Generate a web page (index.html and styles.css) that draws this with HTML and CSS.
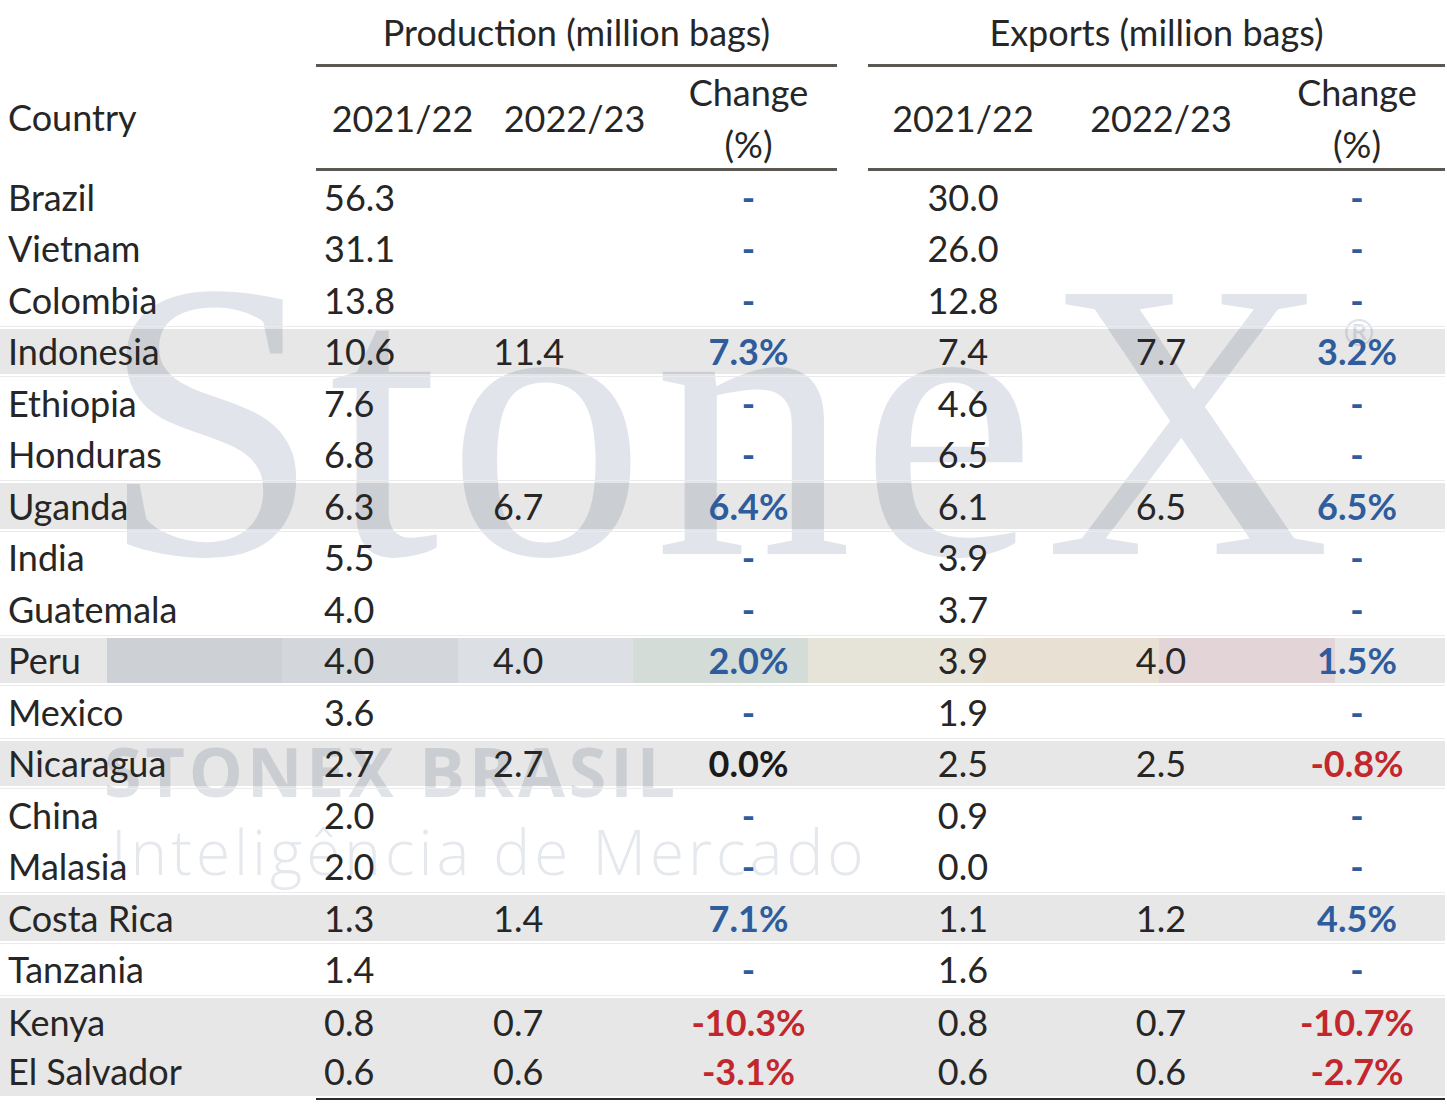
FILE: index.html
```html
<!DOCTYPE html>
<html lang="en">
<head>
<meta charset="utf-8">
<title>Coffee production and exports</title>
<link rel="stylesheet" href="styles.css">
</head>
<body>
<div class="page">
  <div class="watermark" aria-hidden="true">
    <span class="wm-stonex">StoneX</span>
    <span class="wm-reg">®</span>
    <span class="wm-brasil">STONEX BRASIL</span>
    <span class="wm-intel">Inteligência de Mercado</span>
  </div>

  <div class="table">
    <div class="row head1">
      <div class="cell"></div>
      <div class="cell group">Production (million bags)</div>
      <div class="cell"></div>
      <div class="cell group">Exports (million bags)</div>
    </div>
    <div class="row head2">
      <div class="cell c">Country</div>
      <div class="cell hc ruled">2021/22</div>
      <div class="cell hc ruled">2022/23</div>
      <div class="cell hc ruled two">Change<br>(%)</div>
      <div class="cell"></div>
      <div class="cell hc ruled">2021/22</div>
      <div class="cell hc ruled">2022/23</div>
      <div class="cell hc ruled two shift">Change<br>(%)</div>
    </div>

    <div class="row"><div class="cell c">Brazil</div><div class="cell p1">56.3</div><div class="cell p2"></div><div class="cell ch blue">-</div><div class="cell"></div><div class="cell e">30.0</div><div class="cell e"></div><div class="cell ch blue shift">-</div></div>
    <div class="row"><div class="cell c">Vietnam</div><div class="cell p1">31.1</div><div class="cell p2"></div><div class="cell ch blue">-</div><div class="cell"></div><div class="cell e">26.0</div><div class="cell e"></div><div class="cell ch blue shift">-</div></div>
    <div class="row"><div class="cell c">Colombia</div><div class="cell p1">13.8</div><div class="cell p2"></div><div class="cell ch blue">-</div><div class="cell"></div><div class="cell e">12.8</div><div class="cell e"></div><div class="cell ch blue shift">-</div></div>
    <div class="row shaded"><div class="cell c">Indonesia</div><div class="cell p1">10.6</div><div class="cell p2">11.4</div><div class="cell ch blue">7.3%</div><div class="cell"></div><div class="cell e">7.4</div><div class="cell e">7.7</div><div class="cell ch blue shift">3.2%</div></div>
    <div class="row"><div class="cell c">Ethiopia</div><div class="cell p1">7.6</div><div class="cell p2"></div><div class="cell ch blue">-</div><div class="cell"></div><div class="cell e">4.6</div><div class="cell e"></div><div class="cell ch blue shift">-</div></div>
    <div class="row"><div class="cell c">Honduras</div><div class="cell p1">6.8</div><div class="cell p2"></div><div class="cell ch blue">-</div><div class="cell"></div><div class="cell e">6.5</div><div class="cell e"></div><div class="cell ch blue shift">-</div></div>
    <div class="row shaded"><div class="cell c">Uganda</div><div class="cell p1">6.3</div><div class="cell p2">6.7</div><div class="cell ch blue">6.4%</div><div class="cell"></div><div class="cell e">6.1</div><div class="cell e">6.5</div><div class="cell ch blue shift">6.5%</div></div>
    <div class="row"><div class="cell c">India</div><div class="cell p1">5.5</div><div class="cell p2"></div><div class="cell ch blue">-</div><div class="cell"></div><div class="cell e">3.9</div><div class="cell e"></div><div class="cell ch blue shift">-</div></div>
    <div class="row"><div class="cell c">Guatemala</div><div class="cell p1">4.0</div><div class="cell p2"></div><div class="cell ch blue">-</div><div class="cell"></div><div class="cell e">3.7</div><div class="cell e"></div><div class="cell ch blue shift">-</div></div>
    <div class="row shaded band"><div class="cell c">Peru</div><div class="cell p1">4.0</div><div class="cell p2">4.0</div><div class="cell ch blue">2.0%</div><div class="cell"></div><div class="cell e">3.9</div><div class="cell e">4.0</div><div class="cell ch blue shift">1.5%</div></div>
    <div class="row"><div class="cell c">Mexico</div><div class="cell p1">3.6</div><div class="cell p2"></div><div class="cell ch blue">-</div><div class="cell"></div><div class="cell e">1.9</div><div class="cell e"></div><div class="cell ch blue shift">-</div></div>
    <div class="row shaded"><div class="cell c">Nicaragua</div><div class="cell p1">2.7</div><div class="cell p2">2.7</div><div class="cell ch black">0.0%</div><div class="cell"></div><div class="cell e">2.5</div><div class="cell e">2.5</div><div class="cell ch red shift">-0.8%</div></div>
    <div class="row"><div class="cell c">China</div><div class="cell p1">2.0</div><div class="cell p2"></div><div class="cell ch blue">-</div><div class="cell"></div><div class="cell e">0.9</div><div class="cell e"></div><div class="cell ch blue shift">-</div></div>
    <div class="row"><div class="cell c">Malasia</div><div class="cell p1">2.0</div><div class="cell p2"></div><div class="cell ch blue">-</div><div class="cell"></div><div class="cell e">0.0</div><div class="cell e"></div><div class="cell ch blue shift">-</div></div>
    <div class="row shaded"><div class="cell c">Costa Rica</div><div class="cell p1">1.3</div><div class="cell p2">1.4</div><div class="cell ch blue">7.1%</div><div class="cell"></div><div class="cell e">1.1</div><div class="cell e">1.2</div><div class="cell ch blue shift">4.5%</div></div>
    <div class="row"><div class="cell c">Tanzania</div><div class="cell p1">1.4</div><div class="cell p2"></div><div class="cell ch blue">-</div><div class="cell"></div><div class="cell e">1.6</div><div class="cell e"></div><div class="cell ch blue shift">-</div></div>
    <div class="row shaded first"><div class="cell c">Kenya</div><div class="cell p1">0.8</div><div class="cell p2">0.7</div><div class="cell ch red">-10.3%</div><div class="cell"></div><div class="cell e">0.8</div><div class="cell e">0.7</div><div class="cell ch red shift">-10.7%</div></div>
    <div class="row shaded last"><div class="cell c">El Salvador</div><div class="cell p1">0.6</div><div class="cell p2">0.6</div><div class="cell ch red">-3.1%</div><div class="cell"></div><div class="cell e">0.6</div><div class="cell e">0.6</div><div class="cell ch red shift">-2.7%</div></div>
    <div class="bottom-rule"></div>
  </div>
</div>
</body>
</html>
```

FILE: styles.css
```css
html, body {
  margin: 0;
  padding: 0;
  background: #ffffff;
}

.page {
  position: relative;
  width: 1447px;
  height: 1109px;
  overflow: hidden;
  font-family: "Lato", "Liberation Sans", sans-serif;
  font-size: 36px;
  color: #262626;
}

/* ---------- watermark ---------- */
.watermark {
  position: absolute;
  left: 0;
  top: 0;
  width: 1447px;
  height: 1109px;
  z-index: 0;
  pointer-events: none;
}

.wm-stonex {
  position: absolute;
  left: 100px;
  top: 222px;
  font-family: "Liberation Serif", serif;
  font-size: 397px;
  line-height: 1;
  letter-spacing: 8px;
  color: #e1e5eb;
  white-space: nowrap;
}

.wm-reg {
  position: absolute;
  left: 1340px;
  top: 314px;
  font-family: "DejaVu Sans", sans-serif;
  font-size: 38px;
  line-height: 1;
  color: #dde2e9;
}

.wm-brasil {
  position: absolute;
  left: 104px;
  top: 737px;
  font-family: "Open Sans", sans-serif;
  font-weight: 700;
  font-size: 68px;
  line-height: 1;
  letter-spacing: 4px;
  color: #dfe3e8;
  white-space: nowrap;
}

.wm-intel {
  position: absolute;
  left: 111px;
  top: 820px;
  font-family: "Open Sans", sans-serif;
  font-weight: 300;
  font-size: 62px;
  line-height: 1;
  letter-spacing: 4px;
  color: #e5e8ec;
  white-space: nowrap;
}

/* ---------- table ---------- */
.table {
  position: relative;
  z-index: 1;
}

.row {
  display: grid;
  grid-template-columns: 316px 173px 171px 177px 31px 190px 206px 181px;
  grid-template-rows: 100%;
  height: 51.5px;
  box-sizing: border-box;
  width: 1445px;
}

.cell {
  display: flex;
  align-items: center;
  white-space: nowrap;
  min-width: 0;
  min-height: 0;
}

.head1 {
  grid-template-columns: 316px 521px 31px 577px;
  height: 67px;
}

.head1 .group {
  justify-content: center;
  border-bottom: 3px solid #5b5752;
}

.head2 {
  height: 104px;
}

.head2 .ruled {
  border-bottom: 3px solid #5b5752;
}

.hc {
  justify-content: center;
  text-align: center;
}

.hc.two {
  line-height: 52px;
}

.c {
  padding-left: 8px;
}

.head2 .c {
  padding-bottom: 4px;
}

.p1 {
  padding-left: 8px;
}

.p2 {
  padding-left: 4px;
}

.e {
  justify-content: center;
}

.ch {
  justify-content: center;
  font-weight: 700;
}

.shift {
  padding-left: 5px;
}

.blue {
  color: #2e5c9c;
}

.red {
  color: #c1272d;
}

.black {
  color: #1a1a1a;
}

/* shaded rows */
.shaded {
  border-top: 1px solid #ebebeb;
  border-bottom: 1px solid #ebebeb;
  padding: 2px 0;
  background-color: rgba(0, 0, 0, 0.095);
  background-clip: content-box;
}

.shaded.first {
  border-bottom: none;
  padding-bottom: 0;
}

.shaded.last {
  border-top: none;
  padding-top: 0;
  border-bottom: none;
}

.band {
  background-image: linear-gradient(to right,
    transparent 0, transparent 107px,
    #cdd1d6 107px, #cdd1d6 282px,
    #d3d7dc 282px, #d3d7dc 458px,
    #dce0e5 458px, #dce0e5 633px,
    #d3dcd7 633px, #d3dcd7 808px,
    #e6e4d9 808px, #e6e4d9 983px,
    #e9e0d4 983px, #e9e0d4 1159px,
    #e3d5d7 1159px, #e3d5d7 1335px,
    transparent 1335px, transparent 100%);
}

.bottom-rule {
  margin-left: 316px;
  width: 1129px;
  height: 2px;
  background: #2b2b2b;
}
```
